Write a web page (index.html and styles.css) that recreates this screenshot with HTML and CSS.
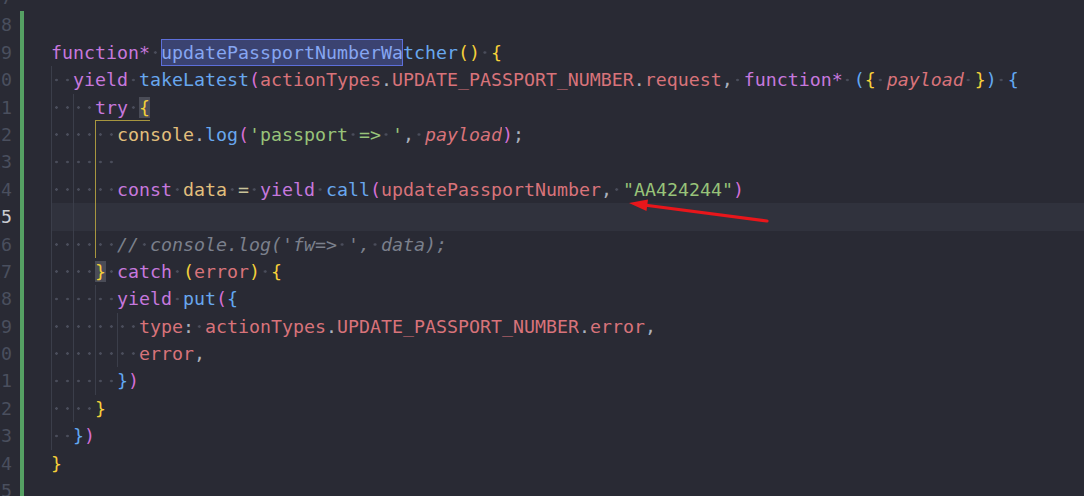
FILE: index.html
```html
<!DOCTYPE html>
<html lang="en">
<head>
  <meta charset="UTF-8">
  <title>sagas.js</title>
  <link rel="stylesheet" href="styles.css">
</head>
<body>
  <div class="editor">
    <div class="line"><span class="num">7</span><span class="mark"></span><div class="code"><span class="src"></span></div></div>
    <div class="line mod"><span class="num">8</span><span class="mark"></span><div class="code"><span class="src"></span></div></div>
    <div class="line mod"><span class="num">9</span><span class="mark"></span><div class="code"><span class="src"><span class="k">function*</span> <span class="sel">updatePassportNumberWa</span><span class="f">tcher</span><span class="b1">()</span> <span class="b1">{</span></span></div></div>
    <div class="line mod"><span class="num">10</span><span class="mark"></span><div class="code"><span class="src"><span class="ind">  </span><span class="k">yield</span> <span class="f">takeLatest</span><span class="b2">(</span><span class="v">actionTypes</span><span class="p">.</span><span class="v">UPDATE_PASSPORT_NUMBER</span><span class="p">.</span><span class="v">request</span><span class="p">,</span> <span class="k">function*</span> <span class="b3">(</span><span class="b1">{</span> <span class="v i">payload</span> <span class="b1">}</span><span class="b3">)</span> <span class="b3">{</span></span></div></div>
    <div class="line mod"><span class="num">11</span><span class="mark"></span><div class="code"><span class="src"><span class="ind">  </span><span class="ind">  </span><span class="scope"><span class="k">try</span> <span class="b1 match">{</span></span></span></div></div>
    <div class="line mod"><span class="num">12</span><span class="mark"></span><div class="code"><span class="src"><span class="ind">  </span><span class="ind">  </span><span class="ind hl">  </span><span class="y">console</span><span class="p">.</span><span class="f">log</span><span class="b2">(</span><span class="s">'passport</span> <span class="s">=&gt;</span> <span class="s">'</span><span class="p">,</span> <span class="v i">payload</span><span class="b2">)</span><span class="p">;</span></span></div></div>
    <div class="line mod"><span class="num">13</span><span class="mark"></span><div class="code"><span class="src"><span class="ind">  </span><span class="ind">  </span><span class="ind hl">  </span></span></div></div>
    <div class="line mod"><span class="num">14</span><span class="mark"></span><div class="code"><span class="src"><span class="ind">  </span><span class="ind">  </span><span class="ind hl">  </span><span class="k">const</span> <span class="y">data</span> <span class="o">=</span> <span class="k">yield</span> <span class="f">call</span><span class="b2">(</span><span class="v">updatePassportNumber</span><span class="p">,</span> <span class="s">"AA424244"</span><span class="b2">)</span></span></div></div>
    <div class="line mod current"><span class="num">15</span><span class="mark"></span><div class="code"><span class="src"><span class="ind">  </span><span class="ind">  </span><span class="ind hl">  </span></span></div></div>
    <div class="line mod"><span class="num">16</span><span class="mark"></span><div class="code"><span class="src"><span class="ind">  </span><span class="ind">  </span><span class="ind hl">  </span><span class="c">//</span> <span class="c">console.log('fw=&gt;</span> <span class="c">',</span> <span class="c">data);</span></span></div></div>
    <div class="line mod"><span class="num">17</span><span class="mark"></span><div class="code"><span class="src"><span class="ind">  </span><span class="ind">  </span><span class="b1 match">}</span> <span class="k">catch</span> <span class="b1">(</span><span class="v">error</span><span class="b1">)</span> <span class="b1">{</span></span></div></div>
    <div class="line mod"><span class="num">18</span><span class="mark"></span><div class="code"><span class="src"><span class="ind">  </span><span class="ind">  </span><span class="ind">  </span><span class="k">yield</span> <span class="f">put</span><span class="b2">(</span><span class="b3">{</span></span></div></div>
    <div class="line mod"><span class="num">19</span><span class="mark"></span><div class="code"><span class="src"><span class="ind">  </span><span class="ind">  </span><span class="ind">  </span><span class="ind">  </span><span class="v">type</span><span class="p">:</span> <span class="v">actionTypes</span><span class="p">.</span><span class="v">UPDATE_PASSPORT_NUMBER</span><span class="p">.</span><span class="v">error</span><span class="p">,</span></span></div></div>
    <div class="line mod"><span class="num">20</span><span class="mark"></span><div class="code"><span class="src"><span class="ind">  </span><span class="ind">  </span><span class="ind">  </span><span class="ind">  </span><span class="v">error</span><span class="p">,</span></span></div></div>
    <div class="line mod"><span class="num">21</span><span class="mark"></span><div class="code"><span class="src"><span class="ind">  </span><span class="ind">  </span><span class="ind">  </span><span class="b3">}</span><span class="b2">)</span></span></div></div>
    <div class="line mod"><span class="num">22</span><span class="mark"></span><div class="code"><span class="src"><span class="ind">  </span><span class="ind">  </span><span class="b1">}</span></span></div></div>
    <div class="line mod"><span class="num">23</span><span class="mark"></span><div class="code"><span class="src"><span class="ind">  </span><span class="b3">}</span><span class="b2">)</span></span></div></div>
    <div class="line mod"><span class="num">24</span><span class="mark"></span><div class="code"><span class="src"><span class="b1">}</span></span></div></div>
    <div class="line mod"><span class="num">25</span><span class="mark"></span><div class="code"><span class="src"></span></div></div>
  </div>

  <!-- annotation drawn over the screenshot -->
  <svg class="arrow" width="1084" height="496" viewBox="0 0 1084 496">
    <line x1="767" y1="221" x2="644" y2="205" stroke="#e8161b" stroke-width="3.2" stroke-linecap="round"/>
    <polygon points="629,203 648,199.5 646.5,211" fill="#e8161b"/>
  </svg>
</body>
</html>
```

FILE: styles.css
```css
* { box-sizing: border-box; margin: 0; padding: 0; }
body {
  position: relative;
  height: 496px;
  overflow: hidden;
  background: #292a34;
  font-family: "DejaVu Sans Mono", "Liberation Mono", monospace;
  font-size: 18.27px;
  color: #abb2bf;
}
.editor {
  margin: -16px 0 0 -22px;
}
.line {
  display: flex;
  height: 27.4px;
  line-height: 27.4px;
}
.num {
  width: 34px;
  text-align: right;
  color: #4a4f5e;
}
.mark {
  width: 4px;
  margin-left: 8px;
}
.line.mod .mark { background: #55a063; }
.code {
  flex: 1;
  margin-left: 27px;
}
.line.current .code { background: #30323d; }
.line.current .num { color: #c9ccd2; }

/* source text: whitespace shown as faint dots */
.src {
  display: inline-block;
  white-space: pre;
  background-image: radial-gradient(circle at 50% 50%, #4a4d5b 1px, transparent 1.6px);
  background-size: 1ch 100%;
  background-repeat: repeat-x;
}
.src span { background-color: #292a34; }
.line.current .src span { background-color: #30323d; }
.src .ind,
.src .scope { background-color: transparent; }

/* indent guides */
.ind {
  display: inline-block;
  box-shadow: inset 1px 0 0 #3b3e4a;
}
.ind.hl { box-shadow: inset 1px 0 0 #a7963f; }
.scope {
  display: inline-block;
  box-shadow: inset 0 -1px 0 #a7963f;
}

/* tokens */
.k { color: #c678dd; }
.f { color: #68a7ee; }
.v { color: #d8737a; }
.y { color: #e2bf7c; }
.s { color: #98c379; }
.o { color: #c9c39a; }
.p { color: #abb2bf; }
.c { color: #7b808c; font-style: italic; }
.i { font-style: italic; }
.b1 { color: #f5d03a; }
.b2 { color: #d66fd6; }
.b3 { color: #62a8f2; }
.src .match { background-color: #4a4c57; }
.src .sel {
  display: inline-block;
  color: #86a6f2;
  background-color: #3b4371;
  box-shadow: inset 0 0 0 1px #5d6fda;
}

.arrow {
  position: absolute;
  left: 0;
  top: 0;
  pointer-events: none;
}
```
